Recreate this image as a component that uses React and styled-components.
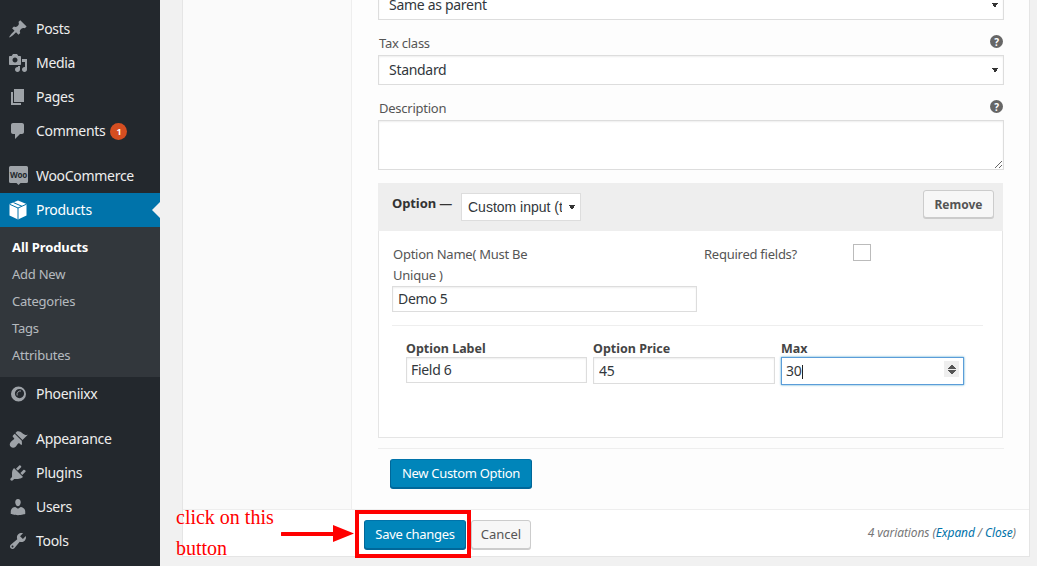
import React from "react";
import styled, { createGlobalStyle } from "styled-components";

const Global = createGlobalStyle`
  html, body { margin: 0; padding: 0; height: 566px; overflow: hidden; background: #f1f1f1; }
  body { font-family: "Noto Sans", "Open Sans", sans-serif; font-size: 13px; color: #444; letter-spacing: -.25px; }
  * { box-sizing: border-box; }
`;
const Page = styled.div`display: flex; width: 1037px; height: 566px; overflow: hidden; position: relative;`;
const Sidebar = styled.nav`width: 160px; flex: none; background: #23282d; padding-top: 12px; height: 566px; overflow: hidden;`;
const MenuItem = styled.div`
  position: relative; display: flex; align-items: center; height: 34px;
  padding-left: 8px; gap: 8px; font-size: 14px; letter-spacing: -.3px; color: ${p => p.$active ? "#fff" : "#eee"};
  background: ${p => p.$active ? "#0073aa" : "transparent"};
  margin-top: ${p => p.$gap || 0}px;
  svg { flex: none; width: 20px; height: 20px; fill: ${p => p.$active ? "#fff" : "#9ea3a8"}; }
`;
const MenuText = styled.span`padding-bottom: 2px;`;
const Notch = styled.span`
  position: absolute; right: 0; top: 9px; border: 8px solid transparent; border-right-color: #f1f1f1; border-left-width: 0;
`;
const Badge = styled.span`
  width: 17px; height: 17px; border-radius: 50%; background: #d54e21; color: #fff; font-size: 9px; font-weight: 700;
  display: inline-flex; align-items: center; justify-content: center; margin-left: -3px;
`;
const SubMenu = styled.div`background: #32373c; height: 150px; padding-top: 7px;`;
const SubItem = styled.div`
  height: 27px; line-height: 27px; padding-left: 12px; font-size: 13px;
  letter-spacing: ${p => p.$current ? "-.1px" : "-.25px"};
  color: ${p => p.$current ? "#fff" : "rgba(240,245,250,.7)"}; font-weight: ${p => p.$current ? 700 : 400};
`;
const Main = styled.main`flex: 1; min-width: 0; padding: 0 7px 0 22px;`;
const Panel = styled.section`
  height: 557px; background: #fff; border: 1px solid #e5e5e5; border-width: 0 1px 1px 1px;
  display: flex; flex-direction: column; overflow: hidden;
`;
const Columns = styled.div`flex: none; height: 509px; display: flex; overflow: hidden;`;
const Tabs = styled.div`width: 169px; flex: none; background: #fafafa; border-right: 1px solid #eee;`;
const Content = styled.div`flex: 1; min-width: 0; background: #fdfdfd; padding: 0 26px;`;
const Scrolled = styled.div`margin-top: -10px;`;
const FieldLabel = styled.div`
  display: flex; justify-content: space-between; align-items: center; height: 21px; padding: 0 0 2px 1px; font-size: 13px; color: #555;
  margin-top: ${p => p.$top}px; margin-bottom: 1px;
`;
const Help = styled.span`
  width: 13px; height: 13px; border-radius: 50%; background: #666; color: #fff; font-size: 10px; font-weight: 700;
  display: inline-flex; align-items: center; justify-content: center; margin-top: -2px;
`;
const triangle = `
  background-color: #fff;
  background-image: linear-gradient(to top right, transparent 50%, #333 50%), linear-gradient(to top left, transparent 50%, #333 50%);
  background-size: 3px 5px, 3px 5px;
  background-position: right 8px center, right 5px center;
  background-repeat: no-repeat;
`;
const Select = styled.select`
  display: block; width: 626px; height: 30px; margin: 0; padding: 0 20px 2px 10px; border: 1px solid #ddd; border-radius: 0;
  appearance: none; ${triangle}
  font: 14px "Noto Sans", sans-serif; letter-spacing: -.3px; color: #32373c; box-shadow: inset 0 1px 2px rgba(0,0,0,.07);
`;
const Area = styled.textarea`
  display: block; width: 626px; height: 50px; margin: 0; background: #fff; border: 1px solid #ddd; border-radius: 0;
  box-shadow: inset 0 1px 2px rgba(0,0,0,.07);
`;
const OptionBox = styled.div`width: 625px; margin-top: 13px;`;
const OptionHead = styled.div`height: 48px; background: #eee; display: flex; align-items: center; padding: 0 9px 0 14px;`;
const OptionTitle = styled.strong`flex: none; width: 69px; font-size: 13px; font-weight: 700; letter-spacing: -.1px; color: #333; margin-top: -8px;`;
const TypeSelect = styled.select`
  flex: none; width: 120px; height: 28px; margin: 0; padding: 0 18px 0 6px; border: 1px solid #ddd; border-radius: 0;
  appearance: none; ${triangle}
  font: 14px "Liberation Sans", sans-serif; letter-spacing: 0; color: #32373c;
`;
const Remove = styled.button`
  margin-left: auto; width: 71px; height: 28px; padding: 0; background: #f7f7f7; border: 1px solid #ccc; border-radius: 3px;
  box-shadow: 0 1px 0 #ccc; font: 700 12px "Noto Sans", sans-serif; color: #555; margin-top: -6px;
`;
const OptionBody = styled.div`height: 207px; background: #fff; border: 1px solid #e5e5e5; border-top: 0; padding: 13px 19px 0 13px;`;
const NameRow = styled.div`display: grid; grid-template-columns: 305px 1fr; column-gap: 7px;`;
const NameLabel = styled.label`display: block; width: 170px; font-size: 13px; line-height: 21px; color: #555; padding-left: 1px;`;
const Input = styled.input`
  display: block; width: 100%; height: ${p => p.$h || 26}px; margin: 0; padding: 0 5px 1px ${p => p.$pl ?? 5}px; background: #fff; border: 1px solid #ddd; border-radius: 0;
  font: 14px "Noto Sans", sans-serif; letter-spacing: -.3px; color: #32373c; box-shadow: inset 0 1px 2px rgba(0,0,0,.07); outline: 0;
`;
const RequiredWrap = styled.div`display: grid; grid-template-columns: 149px 18px; align-items: start; font-size: 13px; line-height: 21px; color: #555;`;
const Check = styled.span`width: 18px; height: 17px; background: #fff; border: 1px solid #bbb;`;
const RowRule = styled.div`height: 1px; background: #eee; margin-top: 13px;`;
const PriceGrid = styled.div`display: grid; grid-template-columns: 181px 182px 183px; column-gap: 6px; margin: 15px 0 0 14px;`;
const PriceCol = styled.div`position: relative;`;
const PriceLabel = styled.div`font-size: 12.5px; font-weight: 700; letter-spacing: 0; line-height: 16px; color: #444;`;
const NumInput = styled(Input)`
  height: 28px; padding-left: 4px; padding-right: 4px; border-color: #5b9dd9; box-shadow: 0 0 2px rgba(30,140,190,.8); caret-color: transparent;
  &::-webkit-inner-spin-button {
    -webkit-appearance: none; appearance: none; opacity: 1; display: block; width: 15px; height: 16px; margin: 0;
    background-color: #eee;
    background-image:
      linear-gradient(to bottom right, transparent 50%, #555 50%), linear-gradient(to bottom left, transparent 50%, #555 50%),
      linear-gradient(to top right, transparent 50%, #555 50%), linear-gradient(to top left, transparent 50%, #555 50%);
    background-size: 4px 5px;
    background-position: 3.5px 2.5px, 7.5px 2.5px, 3.5px 9px, 7.5px 9px;
    background-repeat: no-repeat;
  }
`;
const Caret = styled.span`position: absolute; left: 21px; top: 24px; width: 1px; height: 14px; background: #222;`;
const BottomRule = styled.div`width: 626px; height: 1px; background: #eee; margin-top: 10px;`;
const Primary = styled.button`
  height: ${p => p.$h}px; width: ${p => p.$w}px; padding: 0 0 2px; background: #0085ba; border: 1px solid #006799; border-radius: 3px;
  border-color: #0073aa #006799 #006799; box-shadow: 0 1px 0 #006799; color: #fff; font: 13px "Noto Sans", sans-serif; letter-spacing: -.3px; flex: none;
`;
const NewOption = styled(Primary)`display: block; margin: 10px 0 0 12px;`;
const Footer = styled.footer`flex: 1; border-top: 1px solid #eee; display: flex; align-items: flex-start; padding: 10px 13px 0 181px; background: #fff;`;
const Cancel = styled.button`
  width: 60px; height: 29px; padding: 0 0 2px; margin-left: 5px; background: #f7f7f7; border: 1px solid #ccc; border-radius: 3px;
  box-shadow: 0 1px 0 #ccc; font: 13px "Noto Sans", sans-serif; color: #555;
`;
const Count = styled.div`margin-left: auto; font-size: 12px; font-style: italic; letter-spacing: -.1px; color: #777; line-height: 25px;`;
const Link = styled.span`color: #0073aa;`;
const Note = styled.div`
  position: absolute; left: 176px; top: 502px; width: 110px; font: 20px/31px "Liberation Serif", serif; letter-spacing: 0; color: #f00;
`;
const Arrow = styled.svg`position: absolute; left: 281px; top: 524px; width: 74px; height: 20px;`;
const RedBox = styled.div`position: absolute; left: 355px; top: 510px; width: 116px; height: 48px; border: 4px solid #f00;`;

const I = ({ d, children }) => <svg viewBox="0 0 20 20">{d ? <path d={d} /> : children}</svg>;
const ic = {
  post: "M10.44 3.02l1.82-1.82 6.36 6.35-1.83 1.82c-1.05-.68-2.48-.57-3.41.36l-.75.75c-.92.93-1.04 2.35-.35 3.41l-1.83 1.82-2.41-2.41-2.8 2.79c-.42.42-3.38 2.71-3.8 2.29s1.86-3.39 2.28-3.81l2.79-2.79L4.1 9.36l1.83-1.82c1.05.69 2.48.57 3.41-.36l.75-.75c.93-.92 1.04-2.35.35-3.41z",
  media: "M13 11V4c0-.55-.45-1-1-1h-1.67L9 1H5L3.67 3H2c-.55 0-1 .45-1 1v7c0 .55.45 1 1 1h10c.55 0 1-.45 1-1zM7 4.5c1.38 0 2.5 1.12 2.5 2.5S8.38 9.5 7 9.5 4.5 8.38 4.5 7 5.62 4.5 7 4.5zM14 6h5v10.5c0 1.38-1.12 2.5-2.5 2.5S14 17.88 14 16.5s1.12-2.5 2.5-2.5c.17 0 .34.02.5.05V9h-3V6zm-4 8.05V13h2v3.5c0 1.38-1.12 2.5-2.5 2.5S7 17.88 7 16.5 8.12 14 9.5 14c.17 0 .34.02.5.05z",
  page: "M6 15V2h10v13H6zm-1 1h8v2H3V5h2v11z",
  comment: "M5 2h9c1.1 0 2 .9 2 2v7c0 1.1-.9 2-2 2h-2l-5 5v-5H5c-1.1 0-2-.9-2-2V4c0-1.1.9-2 2-2z",
  woo: "M2.5 0h16a1.500 1.500 0 0 1 1.500 1.500v14a1.500 1.500 0 0 1-1.500 1.500h-6l-2 2-2-2h-6A1.500 1.500 0 0 1 1 15.500v-14A1.500 1.500 0 0 1 2.500 0z",
  appearance: "M14.48 11.06L7.41 3.99l1.5-1.5c.5-.56 2.3-.47 3.51.32 1.21.8 1.43 1.28 2.91 2.1 1.18.64 2.45 1.26 4.45.85zm-.71.71L6.7 4.7 4.93 6.47c-.39.39-.39 1.02 0 1.41l1.06 1.06c.39.39.39 1.03 0 1.42-.6.6-1.43 1.11-2.21 1.69-.35.26-.7.53-1.01.84-1.34 1.34-1.34 3.5 0 4.84s3.5 1.34 4.84 0c.31-.31.58-.66.84-1.01.58-.78 1.09-1.61 1.69-2.21.39-.39 1.03-.39 1.42 0l1.06 1.06c.39.39 1.02.39 1.41 0z",
  plugin: "M13.11 4.36L9.87 7.6 8 5.73l3.24-3.24c.35-.34 1.05-.2 1.56.32.52.51.66 1.21.31 1.55zm-8 1.77l.91-1.12 9.01 9.01-1.19.84c-.71.71-2.63 1.16-3.82 1.16H6.14L4.9 17.26c-.59.59-1.54.59-2.12 0-.59-.58-.59-1.53 0-2.12l1.24-1.24v-3.88c0-1.13.4-3.19 1.09-3.89zm7.26 3.97l3.24-3.24c.34-.35 1.04-.21 1.55.31.52.51.66 1.21.31 1.55l-3.24 3.25z",
  users: "M10 9.25c-2.27 0-2.73-3.44-2.73-3.44C7 4.02 7.82 2 9.97 2c2.16 0 2.98 2.02 2.71 3.81 0 0-.41 3.44-2.68 3.44zm0 2.57L12.72 10c2.39 0 4.52 2.33 4.52 4.53v2.49s-3.65 1.13-7.24 1.13c-3.65 0-7.24-1.13-7.24-1.13v-2.49c0-2.25 1.94-4.48 4.47-4.48z",
  tools: "M16.68 9.77c-1.34 1.34-3.3 1.67-4.95.99l-5.41 6.52c-.99.99-2.59.99-3.58 0s-.99-2.59 0-3.57l6.52-5.42c-.68-1.65-.35-3.61.99-4.95 1.28-1.28 3.12-1.62 4.72-1.06l-2.89 2.89 2.82 2.82 2.86-2.87c.53 1.58.18 3.39-1.08 4.65zM3.81 16.21c.4.39 1.04.39 1.43 0 .4-.4.4-1.04 0-1.43-.39-.4-1.03-.4-1.43 0-.39.39-.39 1.03 0 1.43z",
};

export default function App() {
  return (
    <Page>
      <Global />
      <Sidebar>
        <MenuItem><I d={ic.post} /><MenuText>Posts</MenuText></MenuItem>
        <MenuItem><I d={ic.media} /><MenuText>Media</MenuText></MenuItem>
        <MenuItem><I d={ic.page} /><MenuText>Pages</MenuText></MenuItem>
        <MenuItem><I d={ic.comment} /><MenuText>Comments</MenuText><Badge>1</Badge></MenuItem>
        <MenuItem $gap={11}>
          <I>
            <path d={ic.woo} />
            <text x="10.500" y="11.500" textAnchor="middle" fontFamily="Noto Sans" fontWeight="700" fontSize="8" letterSpacing="-.2" fill="#23282d">Woo</text>
          </I>
          <MenuText>WooCommerce</MenuText>
        </MenuItem>
        <MenuItem $active>
          <I>
            <path d="M10 .5l8.500 3.500v11.500L10 19.500 1.500 15.500V4z" />
            <path d="M1.500 4.200L10 8l8.500-3.800M10 8v11.500M5.500 2.600L14 6.300" fill="none" stroke="#0073aa" strokeWidth="1" />
          </I>
          <MenuText>Products</MenuText><Notch />
        </MenuItem>
        <SubMenu>
          <SubItem $current>All Products</SubItem>
          <SubItem>Add New</SubItem>
          <SubItem>Categories</SubItem>
          <SubItem>Tags</SubItem>
          <SubItem>Attributes</SubItem>
        </SubMenu>
        <MenuItem>
          <I>
            <path fillRule="evenodd" d="M10.500 2.500a7.500 7.500 0 1 0 0 15 7.500 7.500 0 0 0 0-15zM11.500 5a4.600 4.600 0 1 1 0 9.200 4.600 4.600 0 0 1 0-9.200z" />
            <path d="M13 7a3.400 3.400 0 0 0-3.800 4.500" fill="none" stroke="#9ea3a8" strokeWidth=".9" />
          </I>
          <MenuText>Phoeniixx</MenuText>
        </MenuItem>
        <MenuItem $gap={11}><I d={ic.appearance} /><MenuText>Appearance</MenuText></MenuItem>
        <MenuItem><I d={ic.plugin} /><MenuText>Plugins</MenuText></MenuItem>
        <MenuItem><I d={ic.users} /><MenuText>Users</MenuText></MenuItem>
        <MenuItem><I d={ic.tools} /><MenuText>Tools</MenuText></MenuItem>
      </Sidebar>
      <Main>
        <Panel>
          <Columns>
            <Tabs />
            <Content>
              <Scrolled>
                <Select defaultValue="p"><option value="p">Same as parent</option></Select>
                <FieldLabel $top={13}>Tax class<Help>?</Help></FieldLabel>
                <Select defaultValue="s"><option value="s">Standard</option></Select>
                <FieldLabel $top={13}>Description<Help>?</Help></FieldLabel>
                <Area />
                <OptionBox>
                  <OptionHead>
                    <OptionTitle>Option —</OptionTitle>
                    <TypeSelect defaultValue="c"><option value="c">Custom input (text)</option></TypeSelect>
                    <Remove>Remove</Remove>
                  </OptionHead>
                  <OptionBody>
                    <NameRow>
                      <div>
                        <NameLabel>Option Name( Must Be Unique )</NameLabel>
                        <Input defaultValue="Demo 5" />
                      </div>
                      <RequiredWrap>Required fields?<Check /></RequiredWrap>
                    </NameRow>
                    <RowRule />
                    <PriceGrid>
                      <PriceCol>
                        <PriceLabel>Option Label</PriceLabel>
                        <Input $pl={4} defaultValue="Field 6" />
                      </PriceCol>
                      <PriceCol>
                        <PriceLabel>Option Price</PriceLabel>
                        <Input $h={27} defaultValue="45" />
                      </PriceCol>
                      <PriceCol>
                        <PriceLabel>Max</PriceLabel>
                        <NumInput type="number" defaultValue="30" />
                        <Caret />
                      </PriceCol>
                    </PriceGrid>
                  </OptionBody>
                </OptionBox>
                <BottomRule />
                <NewOption $w={142} $h={29}>New Custom Option</NewOption>
              </Scrolled>
            </Content>
          </Columns>
          <Footer>
            <Primary $w={102} $h={29}>Save changes</Primary>
            <Cancel>Cancel</Cancel>
            <Count>4 variations (<Link>Expand</Link> / <Link>Close</Link>)</Count>
          </Footer>
        </Panel>
      </Main>
      <Note>click on this button</Note>
      <Arrow viewBox="0 0 74 20">
        <path d="M1 8h51V1l21 8.500-21 8.500v-6H1a2 2 0 0 1 0-4z" fill="#f00" />
      </Arrow>
      <RedBox />
    </Page>
  );
}
